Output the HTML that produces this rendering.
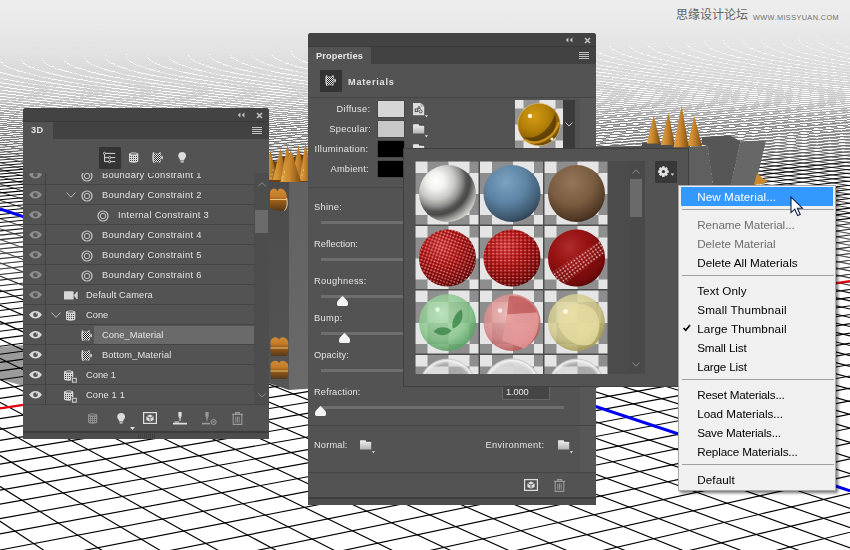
<!DOCTYPE html>
<html><head><meta charset="utf-8">
<style>
html,body{margin:0;padding:0;}
body{width:850px;height:550px;overflow:hidden;position:relative;background:#fff;font-family:"Liberation Sans",sans-serif;}
#bg{position:absolute;left:0;top:0;}
.abs{position:absolute}
.pn{will-change:transform;position:absolute;background:#535353;color:#dadada;font-size:10px;}
.t{position:absolute;white-space:nowrap;line-height:12px;height:12px;color:#e4e4e4;font-size:9.3px}
.row{position:absolute;left:0;width:231px;height:20px;border-top:1px solid #444;box-sizing:border-box}
.mi{position:absolute;left:18.2px;white-space:nowrap;line-height:14px;height:14px}
.ms{position:absolute;left:3px;width:151.6px;height:1px;background:#a0a0a0}
svg{position:absolute;overflow:visible}

</style></head><body>
<svg id="bg" width="850" height="550" viewBox="0 0 850 550">
<defs>
<linearGradient id="fg0" x1="0" y1="0" x2="0" y2="550" gradientUnits="userSpaceOnUse"><stop offset="0.0000" stop-color="#fff" stop-opacity="0.070"/><stop offset="0.0364" stop-color="#fff" stop-opacity="0.080"/><stop offset="0.0909" stop-color="#fff" stop-opacity="0.115"/><stop offset="0.1455" stop-color="#fff" stop-opacity="0.170"/><stop offset="0.1818" stop-color="#fff" stop-opacity="0.240"/><stop offset="0.2036" stop-color="#fff" stop-opacity="0.360"/><stop offset="0.2273" stop-color="#fff" stop-opacity="0.510"/><stop offset="0.2636" stop-color="#fff" stop-opacity="0.360"/><stop offset="0.3000" stop-color="#fff" stop-opacity="0.000"/><stop offset="1.0000" stop-color="#fff" stop-opacity="0.000"/></linearGradient>
<linearGradient id="fg1" x1="0" y1="0" x2="0" y2="550" gradientUnits="userSpaceOnUse"><stop offset="0.0000" stop-color="#fff" stop-opacity="0.000"/><stop offset="0.2273" stop-color="#fff" stop-opacity="0.000"/><stop offset="0.2636" stop-color="#fff" stop-opacity="0.360"/><stop offset="0.3000" stop-color="#fff" stop-opacity="0.920"/><stop offset="0.3273" stop-color="#fff" stop-opacity="1.000"/><stop offset="0.3909" stop-color="#fff" stop-opacity="1.000"/><stop offset="0.4545" stop-color="#fff" stop-opacity="0.600"/><stop offset="0.5455" stop-color="#fff" stop-opacity="0.000"/><stop offset="1.0000" stop-color="#fff" stop-opacity="0.000"/></linearGradient>
<linearGradient id="fg2" x1="0" y1="0" x2="0" y2="550" gradientUnits="userSpaceOnUse"><stop offset="0.0000" stop-color="#fff" stop-opacity="0.000"/><stop offset="0.3909" stop-color="#fff" stop-opacity="0.000"/><stop offset="0.5455" stop-color="#fff" stop-opacity="1.000"/><stop offset="1.0000" stop-color="#fff" stop-opacity="1.000"/></linearGradient>
<mask id="m0" maskUnits="userSpaceOnUse" x="0" y="0" width="850" height="550"><rect width="850" height="550" fill="url(#fg0)"/></mask>
<mask id="m1" maskUnits="userSpaceOnUse" x="0" y="0" width="850" height="550"><rect width="850" height="550" fill="url(#fg1)"/></mask>
<mask id="m2" maskUnits="userSpaceOnUse" x="0" y="0" width="850" height="550"><rect width="850" height="550" fill="url(#fg2)"/></mask>
<path id="ga" d="M-20.0 546.2L13.7 570.0M-20.0 508.0L73.6 570.0M-20.0 474.0L133.4 570.0M-20.0 443.6L193.2 570.0M-20.0 416.3L253.0 570.0M-20.0 391.6L312.8 570.0M-20.0 369.1L372.6 570.0M-20.0 348.6L432.4 570.0M-20.0 329.8L492.2 570.0M-20.0 312.5L552.1 570.0M-20.0 296.5L611.9 570.0M-20.0 281.7L671.7 570.0M-20.0 268.0L731.5 570.0M-20.0 255.2L791.3 570.0M-20.0 243.3L851.1 570.0M-20.0 232.2L870.0 555.1M-20.0 221.7L870.0 534.6M-20.0 211.9L870.0 515.3M-20.0 202.7L870.0 497.1M-20.0 193.9L870.0 480.0M-20.0 185.7L870.0 463.8M-20.0 177.9L870.0 448.5M-20.0 170.6L870.0 434.0M-20.0 163.6L870.0 420.2M-20.0 156.9L870.0 407.2M-20.0 150.6L870.0 394.7M-20.0 144.6L870.0 382.9M-20.0 138.9L870.0 371.6M-20.0 133.4L870.0 360.8M-20.0 128.2L870.0 350.5M-20.0 123.2L870.0 340.7M-20.0 118.4L870.0 331.3M-20.0 113.8L870.0 322.2M-20.0 109.4L870.0 313.6M-20.0 105.2L870.0 305.3M-20.0 101.1L870.0 297.3M-20.0 97.2L870.0 289.6M-20.0 93.4L870.0 282.2M-20.0 89.8L870.0 275.1M-20.0 86.3L870.0 268.2M-20.0 83.0L870.0 261.6M-20.0 79.7L870.0 255.3M-20.0 76.6L870.0 249.1M-20.0 73.6L870.0 243.1M-20.0 70.7L870.0 237.4M-20.0 67.8L870.0 231.8M-20.0 65.1L870.0 226.4M-20.0 62.5L870.0 221.2M-20.0 59.9L870.0 216.2M-20.0 57.4L870.0 211.3M-20.0 55.0L870.0 206.5M-20.0 52.6L870.0 201.9M-20.0 50.4L870.0 197.5M-20.0 48.2L870.0 193.1M-20.0 46.0L870.0 188.9M-20.0 43.9L870.0 184.8M-20.0 41.9L870.0 180.8M-20.0 40.0L870.0 177.0M-20.0 38.0L870.0 173.2M-20.0 36.2L870.0 169.5M-20.0 34.4L870.0 166.0M-20.0 32.6L870.0 162.5M-20.0 30.9L870.0 159.1M-20.0 29.2L870.0 155.8M-20.0 27.6L870.0 152.6M-20.0 26.0L870.0 149.4M-20.0 24.4L870.0 146.4M-20.0 22.9L870.0 143.4M-20.0 21.4L870.0 140.5M-20.0 20.0L870.0 137.6M-20.0 18.5L870.0 134.8M-20.0 17.2L870.0 132.1M-20.0 15.8L870.0 129.4M-20.0 14.5L870.0 126.8M-20.0 13.2L870.0 124.3M-20.0 11.9L870.0 121.8M-20.0 10.7L870.0 119.4M-20.0 9.5L870.0 117.0M-20.0 8.3L870.0 114.7M-20.0 7.1L870.0 112.4M-20.0 6.0L870.0 110.2M-20.0 4.9L870.0 108.0M-20.0 3.8L870.0 105.9M-20.0 2.7L870.0 103.8M-20.0 1.7L870.0 101.7M-20.0 0.7L870.0 99.7M-20.0 -0.3L870.0 97.7M-20.0 -1.3L870.0 95.8M-20.0 -2.3L870.0 93.9M-20.0 -3.2L870.0 92.0M-20.0 -4.1L870.0 90.2M-20.0 -5.1L870.0 88.4M-20.0 -6.0L870.0 86.6M-20.0 -6.8L870.0 84.9M-20.0 -7.7L870.0 83.2M-20.0 -8.5L870.0 81.5M-20.0 -9.4L870.0 79.9M-20.0 -10.2L870.0 78.3M-20.0 -11.0L870.0 76.7M-20.0 -11.8L870.0 75.2M-20.0 -12.6L870.0 73.6M-20.0 -13.3L870.0 72.1M-20.0 -14.1L870.0 70.7M-20.0 -14.8L870.0 69.2M-20.0 -15.5L870.0 67.8M-20.0 -16.2L870.0 66.4M-20.0 -16.9L870.0 65.0M-20.0 -17.6L870.0 63.7M-20.0 -18.3L870.0 62.3M-20.0 -19.0L870.0 61.0M-20.0 -19.6L870.0 59.7M-16.9 -20.0L870.0 58.4M-9.6 -20.0L870.0 57.2M-2.3 -20.0L870.0 56.0M4.9 -20.0L870.0 54.8M12.2 -20.0L870.0 53.6M19.5 -20.0L870.0 52.4M26.8 -20.0L870.0 51.2M34.0 -20.0L870.0 50.1M41.3 -20.0L870.0 49.0M48.6 -20.0L870.0 47.9M55.8 -20.0L870.0 46.8M63.1 -20.0L870.0 45.7M70.4 -20.0L870.0 44.6M77.7 -20.0L870.0 43.6M84.9 -20.0L870.0 42.5M92.2 -20.0L870.0 41.5M99.5 -20.0L870.0 40.5M106.7 -20.0L870.0 39.5M114.0 -20.0L870.0 38.6M121.3 -20.0L870.0 37.6M128.5 -20.0L870.0 36.7M135.8 -20.0L870.0 35.7M143.1 -20.0L870.0 34.8M150.4 -20.0L870.0 33.9M157.6 -20.0L870.0 33.0M164.9 -20.0L870.0 32.1M172.2 -20.0L870.0 31.2M179.4 -20.0L870.0 30.4M186.7 -20.0L870.0 29.5M194.0 -20.0L870.0 28.7M201.3 -20.0L870.0 27.8M208.5 -20.0L870.0 27.0M215.8 -20.0L870.0 26.2M223.1 -20.0L870.0 25.4M230.3 -20.0L870.0 24.6M237.6 -20.0L870.0 23.8M244.9 -20.0L870.0 23.1M252.1 -20.0L870.0 22.3M259.4 -20.0L870.0 21.6M266.7 -20.0L870.0 20.8M274.0 -20.0L870.0 20.1M281.2 -20.0L870.0 19.4M288.5 -20.0L870.0 18.6M295.8 -20.0L870.0 17.9M303.0 -20.0L870.0 17.2M310.3 -20.0L870.0 16.6M317.6 -20.0L870.0 15.9M324.9 -20.0L870.0 15.2M332.1 -20.0L870.0 14.5M339.4 -20.0L870.0 13.9M346.7 -20.0L870.0 13.2M353.9 -20.0L870.0 12.6M361.2 -20.0L870.0 11.9M368.5 -20.0L870.0 11.3M375.7 -20.0L870.0 10.7M383.0 -20.0L870.0 10.1M390.3 -20.0L870.0 9.4M397.6 -20.0L870.0 8.8M404.8 -20.0L870.0 8.2M412.1 -20.0L870.0 7.7M419.4 -20.0L870.0 7.1M426.6 -20.0L870.0 6.5M433.9 -20.0L870.0 5.9M441.2 -20.0L870.0 5.4M448.5 -20.0L870.0 4.8M455.7 -20.0L870.0 4.2M463.0 -20.0L870.0 3.7M470.3 -20.0L870.0 3.1M477.5 -20.0L870.0 2.6M484.8 -20.0L870.0 2.1M492.1 -20.0L870.0 1.5M499.3 -20.0L870.0 1.0M506.6 -20.0L870.0 0.5M513.9 -20.0L870.0 -0.0M521.2 -20.0L870.0 -0.5M528.4 -20.0L870.0 -1.0M535.7 -20.0L870.0 -1.5M543.0 -20.0L870.0 -2.0M550.2 -20.0L870.0 -2.5M557.5 -20.0L870.0 -3.0M564.8 -20.0L870.0 -3.4M572.1 -20.0L870.0 -3.9M579.3 -20.0L870.0 -4.4M586.6 -20.0L870.0 -4.8M593.9 -20.0L870.0 -5.3M601.1 -20.0L870.0 -5.8M608.4 -20.0L870.0 -6.2M615.7 -20.0L870.0 -6.7M622.9 -20.0L870.0 -7.1M630.2 -20.0L870.0 -7.5M637.5 -20.0L870.0 -8.0M644.8 -20.0L870.0 -8.4M652.0 -20.0L870.0 -8.8M659.3 -20.0L870.0 -9.2M666.6 -20.0L870.0 -9.7M673.8 -20.0L870.0 -10.1M681.1 -20.0L870.0 -10.5M688.4 -20.0L870.0 -10.9M695.7 -20.0L870.0 -11.3M702.9 -20.0L870.0 -11.7M710.2 -20.0L870.0 -12.1M717.5 -20.0L870.0 -12.5M724.7 -20.0L870.0 -12.9M732.0 -20.0L870.0 -13.3M739.3 -20.0L870.0 -13.6M746.5 -20.0L870.0 -14.0M753.8 -20.0L870.0 -14.4M761.1 -20.0L870.0 -14.8M768.4 -20.0L870.0 -15.1M775.6 -20.0L870.0 -15.5M782.9 -20.0L870.0 -15.9M790.2 -20.0L870.0 -16.2M797.4 -20.0L870.0 -16.6M804.7 -20.0L870.0 -16.9M812.0 -20.0L870.0 -17.3M819.3 -20.0L870.0 -17.6M826.5 -20.0L870.0 -18.0M833.8 -20.0L870.0 -18.3M841.1 -20.0L870.0 -18.7M848.3 -20.0L870.0 -19.0M855.6 -20.0L870.0 -19.3M862.9 -20.0L870.0 -19.7"/>
<path id="gb" d="M870.0 548.5L785.8 570.0M870.0 527.3L696.7 570.0M870.0 507.4L607.6 570.0M870.0 488.7L518.5 570.0M870.0 471.1L429.4 570.0M870.0 454.6L340.3 570.0M870.0 438.9L251.2 570.0M870.0 424.1L162.1 570.0M870.0 410.2L73.0 570.0M870.0 396.9L-16.1 570.0M870.0 384.3L-20.0 553.8M870.0 372.3L-20.0 537.6M870.0 360.9L-20.0 522.3M870.0 350.1L-20.0 507.6M870.0 339.7L-20.0 493.6M870.0 329.8L-20.0 480.3M870.0 320.3L-20.0 467.5M870.0 311.3L-20.0 455.3M870.0 302.6L-20.0 443.6M870.0 294.3L-20.0 432.4M870.0 286.3L-20.0 421.6M870.0 278.6L-20.0 411.3M870.0 271.3L-20.0 401.3M870.0 264.2L-20.0 391.8M870.0 257.4L-20.0 382.6M870.0 250.8L-20.0 373.7M870.0 244.4L-20.0 365.1M870.0 238.3L-20.0 356.9M870.0 232.4L-20.0 348.9M870.0 226.7L-20.0 341.2M870.0 221.2L-20.0 333.8M870.0 215.9L-20.0 326.6M870.0 210.7L-20.0 319.7M870.0 205.7L-20.0 312.9M870.0 200.9L-20.0 306.4M870.0 196.2L-20.0 300.1M870.0 191.7L-20.0 294.0M870.0 187.3L-20.0 288.0M870.0 183.0L-20.0 282.3M870.0 178.8L-20.0 276.7M870.0 174.8L-20.0 271.2M870.0 170.9L-20.0 265.9M870.0 167.1L-20.0 260.8M870.0 163.4L-20.0 255.8M870.0 159.8L-20.0 251.0M870.0 156.3L-20.0 246.2M870.0 152.9L-20.0 241.6M870.0 149.5L-20.0 237.1M870.0 146.3L-20.0 232.8M870.0 143.2L-20.0 228.5M870.0 140.1L-20.0 224.4M870.0 137.1L-20.0 220.3M870.0 134.2L-20.0 216.4M870.0 131.3L-20.0 212.5M870.0 128.5L-20.0 208.8M870.0 125.8L-20.0 205.1M870.0 123.1L-20.0 201.5M870.0 120.5L-20.0 198.0M870.0 118.0L-20.0 194.6M870.0 115.5L-20.0 191.3M870.0 113.1L-20.0 188.0M870.0 110.7L-20.0 184.8M870.0 108.4L-20.0 181.7M870.0 106.1L-20.0 178.6M870.0 103.9L-20.0 175.6M870.0 101.7L-20.0 172.7M870.0 99.6L-20.0 169.8M870.0 97.5L-20.0 167.0M870.0 95.5L-20.0 164.2M870.0 93.5L-20.0 161.5M870.0 91.5L-20.0 158.9M870.0 89.6L-20.0 156.3M870.0 87.7L-20.0 153.8M870.0 85.9L-20.0 151.3M870.0 84.1L-20.0 148.8M870.0 82.3L-20.0 146.4M870.0 80.6L-20.0 144.1M870.0 78.8L-20.0 141.8M870.0 77.2L-20.0 139.5M870.0 75.5L-20.0 137.3M870.0 73.9L-20.0 135.1M870.0 72.3L-20.0 133.0M870.0 70.8L-20.0 130.9M870.0 69.2L-20.0 128.8M870.0 67.7L-20.0 126.8M870.0 66.2L-20.0 124.8M870.0 64.8L-20.0 122.8M870.0 63.4L-20.0 120.9M870.0 62.0L-20.0 119.0M870.0 60.6L-20.0 117.2M870.0 59.2L-20.0 115.3M870.0 57.9L-20.0 113.5M870.0 56.6L-20.0 111.8M870.0 55.3L-20.0 110.0M870.0 54.0L-20.0 108.3M870.0 52.8L-20.0 106.6M870.0 51.5L-20.0 105.0M870.0 50.3L-20.0 103.3M870.0 49.1L-20.0 101.7M870.0 48.0L-20.0 100.1M870.0 46.8L-20.0 98.6M870.0 45.7L-20.0 97.1M870.0 44.6L-20.0 95.5M870.0 43.5L-20.0 94.1M870.0 42.4L-20.0 92.6M870.0 41.3L-20.0 91.1M870.0 40.2L-20.0 89.7M870.0 39.2L-20.0 88.3M870.0 38.2L-20.0 86.9M870.0 37.2L-20.0 85.6M870.0 36.2L-20.0 84.2M870.0 35.2L-20.0 82.9M870.0 34.2L-20.0 81.6M870.0 33.3L-20.0 80.3M870.0 32.3L-20.0 79.1M870.0 31.4L-20.0 77.8M870.0 30.5L-20.0 76.6M870.0 29.6L-20.0 75.4M870.0 28.7L-20.0 74.2M870.0 27.8L-20.0 73.0M870.0 27.0L-20.0 71.8M870.0 26.1L-20.0 70.7M870.0 25.3L-20.0 69.5M870.0 24.4L-20.0 68.4M870.0 23.6L-20.0 67.3M870.0 22.8L-20.0 66.2M870.0 22.0L-20.0 65.1M870.0 21.2L-20.0 64.1M870.0 20.4L-20.0 63.0M870.0 19.7L-20.0 62.0M870.0 18.9L-20.0 60.9M870.0 18.2L-20.0 59.9M870.0 17.4L-20.0 58.9M870.0 16.7L-20.0 57.9M870.0 16.0L-20.0 57.0M870.0 15.2L-20.0 56.0M870.0 14.5L-20.0 55.1M870.0 13.8L-20.0 54.1M870.0 13.2L-20.0 53.2M870.0 12.5L-20.0 52.3M870.0 11.8L-20.0 51.4M870.0 11.1L-20.0 50.5M870.0 10.5L-20.0 49.6M870.0 9.8L-20.0 48.7M870.0 9.2L-20.0 47.8M870.0 8.6L-20.0 47.0M870.0 7.9L-20.0 46.1M870.0 7.3L-20.0 45.3M870.0 6.7L-20.0 44.5M870.0 6.1L-20.0 43.7M870.0 5.5L-20.0 42.8M870.0 4.9L-20.0 42.0M870.0 4.3L-20.0 41.3M870.0 3.7L-20.0 40.5M870.0 3.1L-20.0 39.7M870.0 2.6L-20.0 38.9M870.0 2.0L-20.0 38.2M870.0 1.5L-20.0 37.4M870.0 0.9L-20.0 36.7M870.0 0.4L-20.0 35.9M870.0 -0.2L-20.0 35.2M870.0 -0.7L-20.0 34.5M870.0 -1.2L-20.0 33.8M870.0 -1.7L-20.0 33.1M870.0 -2.3L-20.0 32.4M870.0 -2.8L-20.0 31.7M870.0 -3.3L-20.0 31.0M870.0 -3.8L-20.0 30.3M870.0 -4.3L-20.0 29.7M870.0 -4.8L-20.0 29.0M870.0 -5.3L-20.0 28.4M870.0 -5.7L-20.0 27.7M870.0 -6.2L-20.0 27.1M870.0 -6.7L-20.0 26.4M870.0 -7.1L-20.0 25.8M870.0 -7.6L-20.0 25.2M870.0 -8.1L-20.0 24.6M870.0 -8.5L-20.0 24.0M870.0 -9.0L-20.0 23.4M870.0 -9.4L-20.0 22.8M870.0 -9.9L-20.0 22.2M870.0 -10.3L-20.0 21.6M870.0 -10.7L-20.0 21.0M870.0 -11.1L-20.0 20.4M870.0 -11.6L-20.0 19.8M870.0 -12.0L-20.0 19.3M870.0 -12.4L-20.0 18.7M870.0 -12.8L-20.0 18.2M870.0 -13.2L-20.0 17.6M870.0 -13.6L-20.0 17.1M870.0 -14.0L-20.0 16.5M870.0 -14.4L-20.0 16.0M870.0 -14.8L-20.0 15.5M870.0 -15.2L-20.0 14.9M870.0 -15.6L-20.0 14.4M870.0 -16.0L-20.0 13.9M870.0 -16.4L-20.0 13.4M870.0 -16.7L-20.0 12.9M870.0 -17.1L-20.0 12.4M870.0 -17.5L-20.0 11.9M870.0 -17.8L-20.0 11.4M870.0 -18.2L-20.0 10.9M870.0 -18.6L-20.0 10.4M870.0 -18.9L-20.0 9.9M870.0 -19.3L-20.0 9.4M870.0 -19.6L-20.0 9.0M870.0 -20.0L-20.0 8.5M859.8 -20.0L-20.0 8.0M848.9 -20.0L-20.0 7.6M838.1 -20.0L-20.0 7.1M827.3 -20.0L-20.0 6.7M816.4 -20.0L-20.0 6.2M805.6 -20.0L-20.0 5.8M794.8 -20.0L-20.0 5.3M784.0 -20.0L-20.0 4.9M773.1 -20.0L-20.0 4.4M762.3 -20.0L-20.0 4.0M751.5 -20.0L-20.0 3.6M740.6 -20.0L-20.0 3.2M729.8 -20.0L-20.0 2.7M719.0 -20.0L-20.0 2.3M708.2 -20.0L-20.0 1.9M697.3 -20.0L-20.0 1.5M686.5 -20.0L-20.0 1.1M675.7 -20.0L-20.0 0.7M664.8 -20.0L-20.0 0.3M654.0 -20.0L-20.0 -0.1M643.2 -20.0L-20.0 -0.5M632.3 -20.0L-20.0 -0.9M621.5 -20.0L-20.0 -1.3M610.7 -20.0L-20.0 -1.7M599.9 -20.0L-20.0 -2.1M589.0 -20.0L-20.0 -2.4M578.2 -20.0L-20.0 -2.8M567.4 -20.0L-20.0 -3.2M556.5 -20.0L-20.0 -3.6M545.7 -20.0L-20.0 -3.9M534.9 -20.0L-20.0 -4.3M524.0 -20.0L-20.0 -4.7M513.2 -20.0L-20.0 -5.0M502.4 -20.0L-20.0 -5.4M491.6 -20.0L-20.0 -5.7M480.7 -20.0L-20.0 -6.1M469.9 -20.0L-20.0 -6.5M459.1 -20.0L-20.0 -6.8M448.2 -20.0L-20.0 -7.1M437.4 -20.0L-20.0 -7.5M426.6 -20.0L-20.0 -7.8M415.7 -20.0L-20.0 -8.2M404.9 -20.0L-20.0 -8.5M394.1 -20.0L-20.0 -8.8M383.3 -20.0L-20.0 -9.2M372.4 -20.0L-20.0 -9.5M361.6 -20.0L-20.0 -9.8M350.8 -20.0L-20.0 -10.1M339.9 -20.0L-20.0 -10.5M329.1 -20.0L-20.0 -10.8M318.3 -20.0L-20.0 -11.1M307.5 -20.0L-20.0 -11.4M296.6 -20.0L-20.0 -11.7M285.8 -20.0L-20.0 -12.0M275.0 -20.0L-20.0 -12.3M264.1 -20.0L-20.0 -12.7M253.3 -20.0L-20.0 -13.0M242.5 -20.0L-20.0 -13.3M231.6 -20.0L-20.0 -13.6M220.8 -20.0L-20.0 -13.9M210.0 -20.0L-20.0 -14.2M199.2 -20.0L-20.0 -14.4M188.3 -20.0L-20.0 -14.7M177.5 -20.0L-20.0 -15.0M166.7 -20.0L-20.0 -15.3M155.8 -20.0L-20.0 -15.6M145.0 -20.0L-20.0 -15.9M134.2 -20.0L-20.0 -16.2M123.3 -20.0L-20.0 -16.5M112.5 -20.0L-20.0 -16.7M101.7 -20.0L-20.0 -17.0M90.9 -20.0L-20.0 -17.3M80.0 -20.0L-20.0 -17.6M69.2 -20.0L-20.0 -17.8M58.4 -20.0L-20.0 -18.1M47.5 -20.0L-20.0 -18.4M36.7 -20.0L-20.0 -18.6M25.9 -20.0L-20.0 -18.9M15.0 -20.0L-20.0 -19.2M4.2 -20.0L-20.0 -19.4M-6.6 -20.0L-20.0 -19.7M-17.4 -20.0L-20.0 -19.9"/>
</defs>
<rect width="850" height="550" fill="#fff"/>
<path d="M-1 347.2L24 345V386L-1 379.2Z" fill="#9b9b9b"/>
<g mask="url(#m0)" fill="none" stroke="#000" shape-rendering="crispEdges"><use href="#ga" stroke-width="0.6"/><use href="#gb" stroke-width="0.95"/></g>
<g mask="url(#m1)" fill="none" stroke="#000"><use href="#ga" stroke-width="0.75"/><use href="#gb" stroke-width="1.05"/></g>
<g mask="url(#m2)" fill="none" stroke="#000" stroke-width="1.15"><use href="#ga"/><use href="#gb"/></g>
<path d="M0 208.9L850 490.9" stroke="#0000f0" stroke-width="3"/>
<path d="M0 408.4L850 281.2" stroke="#e8000c" stroke-width="2.2"/>
<g id="scene"><defs>
<linearGradient id="cone" x1="0" y1="0" x2="1" y2="0"><stop offset="0" stop-color="#e0a444"/><stop offset=".45" stop-color="#c8862c"/><stop offset="1" stop-color="#7c4c14"/></linearGradient>
<linearGradient id="bxl" x1="0" y1="0" x2="0" y2="1"><stop offset="0" stop-color="#4b4b4b"/><stop offset="1" stop-color="#555555"/></linearGradient>
<linearGradient id="bxr" x1="0" y1="0" x2="0" y2="1"><stop offset="0" stop-color="#616161"/><stop offset="1" stop-color="#6a6a6a"/></linearGradient>
<radialGradient id="glow" cx=".5" cy=".5" r=".5"><stop offset="0" stop-color="#ffd27a"/><stop offset=".5" stop-color="#d8882a"/><stop offset="1" stop-color="#7a4a18" stop-opacity=".2"/></radialGradient>
<linearGradient id="glow2" x1="0" y1="0" x2="0" y2="1"><stop offset="0" stop-color="#d08a34"/><stop offset=".35" stop-color="#c47c28"/><stop offset=".55" stop-color="#9a5c18"/><stop offset="1" stop-color="#54381a"/></linearGradient>
</defs>
<!-- box between panels -->
<path d="M262 181.5H289V390L262 381Z" fill="url(#bxl)"/>
<path d="M289 181.5H312V388.4L289 390Z" fill="url(#bxr)"/>
<path d="M262 166L268 158L276 162L284 156L292 158L300 154L312 158V182H262Z" fill="#6a4212"/>
<g fill="url(#cone)">
<path d="M270.5 150.5L277.5 180H263.5Z"/><path d="M280.2 148.4L287.6 180H272.8Z"/><path d="M287.3 144.2L293.6 179H281Z"/><path d="M298.5 145.4L305.5 179H291.5Z"/><path d="M305.6 142.5L312 181H299.2Z"/><path d="M290.8 150.1L301.2 182H280.4Z"/>
</g>
<g fill="#fff4d0"><circle cx="273" cy="170" r=".6"/><circle cx="284.5" cy="172" r=".6"/><circle cx="272" cy="174.5" r=".6"/><circle cx="283" cy="177" r=".6"/><circle cx="303.5" cy="170" r=".6"/><circle cx="302" cy="175" r=".6"/><circle cx="271" cy="178" r=".6"/><circle cx="282.5" cy="180" r=".6"/></g>
<g id="blobs">
<path d="M270 192C272 187 276 188 277.5 191C279 187 284 188 286 193C288 199 287 206 285 210C281 212 274 211 270 208Z" fill="url(#glow2)"/>
<path d="M270 199.5H286.5" stroke="#ffd890" stroke-width="1" opacity=".8"/>
<path d="M286.5 198C288 203 287 208 284.5 210.5" fill="none" stroke="#f4e6d0" stroke-width=".9"/>
<path d="M270.5 341C273 336 277 336.5 279 339.5C281 336 286 337 288 341C289 346 288.5 352 287 356H271Z" fill="url(#glow2)"/>
<path d="M270.5 348H288" stroke="#ffd890" stroke-width="1" opacity=".8"/>
<path d="M270.5 364C273 359.5 277 360 279 363C281 359.5 286 360.5 288 364.5C289 369.5 288.5 375 287 379H271Z" fill="url(#glow2)"/>
<path d="M270.5 371H288" stroke="#ffd890" stroke-width="1" opacity=".8"/>
</g>
<!-- right group -->
<path d="M596 146.3H642V142.5H690V150H596Z" fill="#4e4e4e"/>
<path d="M701.8 137L729.8 135.4L740.5 141.2L730.6 186H713.3L707.5 146.1L701.8 144.5Z" fill="#565656"/>
<path d="M740.5 141.2L766 140.4L755.3 186H730.6Z" fill="#676767"/>
<path d="M688 147L707.5 146.1L713.3 186H688Z" fill="#5f5f5f"/>
<path d="M757 173.5L767 181.5L760 184.5H754Z" fill="#d08a2e"/>
<g fill="url(#cone)">
<path d="M653.7 115.2L660.6 143.4H646.8Z"/><path d="M668.3 113L675 145H660.8Z"/><path d="M694.3 116L702 146H687.4Z"/><path d="M681.6 105.2L688.8 147.2H673.6Z"/>
</g>
</g>
</svg>
<div class="abs" style="left:676px;top:8px;font-family:'Liberation Sans','Noto Sans CJK SC',sans-serif;font-size:12px;line-height:14px;color:#646464;white-space:nowrap">思缘设计论坛</div>
<div class="abs" style="left:753px;top:12.5px;font-size:7.3px;line-height:10px;letter-spacing:.41px;color:#707070;white-space:nowrap">WWW.MISSYUAN.COM</div>
<svg width="0" height="0" style="position:absolute">
<defs>
<symbol id="eye" viewBox="0 0 14 8" overflow="visible"><path d="M0 4C2.2 .9 4.6 0 7 0S11.8 .9 14 4C11.8 7.1 9.4 8 7 8S2.2 7.1 0 4Z"/><circle cx="7" cy="3.9" r="2.5" fill="#535353"/><circle cx="7.9" cy="3" r=".8"/></symbol>
<symbol id="ring" viewBox="0 0 12 12" overflow="visible"><circle cx="6" cy="6" r="5" fill="none" stroke="#cecece" stroke-width="1.15"/><circle cx="6" cy="6" r="2.7" fill="none" stroke="#c4c4c4" stroke-width="1"/></symbol>
<symbol id="chev" viewBox="0 0 10 6" overflow="visible"><path d="M.5 .5L5 5.3L9.5 .5" fill="none" stroke="#b8b8b8" stroke-width="1"/></symbol>
<symbol id="cam" viewBox="0 0 14 9" overflow="visible"><rect x="0" y=".3" width="9.6" height="8.2" rx=".6" fill="#d8d8d8"/><path d="M10.2 4.4L13.2 .9V8L10.2 4.4Z" fill="#d8d8d8" stroke="#d8d8d8" stroke-width=".8" stroke-linejoin="round"/></symbol>
<symbol id="mesh" viewBox="0 0 10 11" overflow="visible"><path d="M0 1.9C0 -.1 9.3 -.1 9.3 1.9V9.3C9.3 11.2 0 11.2 0 9.3Z" fill="#d8d8d8"/><ellipse cx="4.6" cy="1.9" rx="3.3" ry=".7" fill="#585858"/><g fill="#444"><rect x="1" y="4" width="1" height="1"/><rect x="3" y="4" width="1" height="1"/><rect x="5" y="4" width="1" height="1"/><rect x="7" y="4" width="1" height="1"/><rect x="1" y="6" width="1" height="1"/><rect x="3" y="6" width="1" height="1"/><rect x="5" y="6" width="1" height="1"/><rect x="7" y="6" width="1" height="1"/><rect x="1" y="8" width="1" height="1"/><rect x="3" y="8" width="1" height="1"/><rect x="5" y="8" width="1" height="1"/><rect x="7" y="8" width="1" height="1"/></g></symbol>
<symbol id="meshi" viewBox="0 0 13 13" overflow="visible"><use href="#mesh" x="0" y="0" width="10" height="11"/><rect x="7.2" y="7.2" width="6" height="6" fill="#535353"/><rect x="8.4" y="8.3" width="3.9" height="3.9" fill="none" stroke="#d4d4d4" stroke-width="1"/></symbol>
<pattern id="chk" width="2" height="2" patternUnits="userSpaceOnUse"><rect width="2" height="2" fill="#ececec"/><rect width="1" height="1" fill="#1e1e1e"/><rect x="1" y="1" width="1" height="1" fill="#1e1e1e"/></pattern>
<symbol id="mat" viewBox="0 0 10 11" overflow="visible"><path d="M.5 .2C1.3 1.5 2.3 1.9 3.8 1.9S6.3 1.5 7.2 .2C7.7 2.2 7.9 3.8 7.9 5.4S7.6 8.8 7 10.6C6 10 5 9.8 3.8 9.8S1.5 10.1 .6 10.6C.1 8.8 0 7 0 5.4S.1 2.2 .5 .2Z" fill="url(#chk)" stroke="#dedede" stroke-width=".5"/><path d="M.4 .6C.1 2.4 0 3.8 0 5.4S.2 8.8 .6 10.4" fill="none" stroke="#e6e6e6" stroke-width=".9"/><ellipse cx="9.1" cy="5.6" rx=".8" ry="1.8" fill="#e2e2e2"/></symbol>
<symbol id="bulb" viewBox="0 0 9 12" overflow="visible"><path d="M4.5 0C7 0 8.8 1.8 8.8 4.1C8.8 5.8 7.6 6.8 7 7.8C6.7 8.3 6.7 8.8 6.6 9.3H2.4C2.3 8.8 2.3 8.3 2 7.8C1.4 6.8 .2 5.8 .2 4.1C.2 1.8 2 0 4.5 0Z"/><rect x="2.6" y="10.2" width="3.8" height="1.3" rx=".5"/></symbol>
</defs></svg>

<!-- ================= 3D panel ================= -->
<div class="pn" id="p3d" style="left:23px;top:108px;width:246px;height:331px;border-radius:3px 3px 0 0;overflow:hidden">
 <div class="abs" style="left:0;top:0;width:246px;height:13px;background:#434343"></div>
 <div class="abs" style="left:0;top:13px;width:246px;height:1px;background:#3a3a3a"></div>
 <div class="abs" style="left:0;top:14px;width:246px;height:17px;background:#424242"></div>
 <div class="abs" style="left:0;top:14px;width:30px;height:17px;background:#535353"></div>
 <div class="t" style="left:8px;top:16px;font-weight:700;font-size:9.2px;letter-spacing:.45px;color:#e6e6e6">3D</div>
 <svg style="left:214px;top:4px" width="8" height="6" viewBox="0 0 8 6"><path d="M3.4 .6L.8 3L3.4 5.4ZM7.4 .6L4.8 3L7.4 5.4Z" fill="#c6c6c6"/></svg>
 <svg style="left:233px;top:3.5px" width="7" height="7" viewBox="0 0 7 7"><path d="M1 1L6 6M6 1L1 6" stroke="#c4c4c4" stroke-width="1.5"/></svg>
 <svg style="left:229px;top:19px" width="10" height="8" viewBox="0 0 10 8"><path d="M0 .5H10M0 2.5H10M0 4.5H10M0 6.5H10" stroke="#c4c4c4" stroke-width="1"/></svg>
 <!-- filter icons -->
 <div class="abs" style="left:76px;top:39px;width:22px;height:22px;background:#343434;border-radius:1px"></div>
 <svg style="left:80.4px;top:44px" width="12.6" height="12" viewBox="0 0 14 12" preserveAspectRatio="none"><path d="M1.8 2.6V9.6H6M1.8 5.6H6M2.6 1.4H13.6M8.6 5.6H13.6M8.6 9.6H13.6" fill="none" stroke="#e4e4e4" stroke-width="1"/><circle cx="1.6" cy="1.4" r="1.1" fill="#343434" stroke="#e4e4e4" stroke-width=".9"/><circle cx="7.3" cy="5.6" r="1.2" fill="#343434" stroke="#e4e4e4" stroke-width=".9"/><circle cx="7.3" cy="9.6" r="1.2" fill="#343434" stroke="#e4e4e4" stroke-width=".9"/></svg>
 <svg style="left:106px;top:44px" width="10" height="11"><use href="#mesh" width="10" height="11"/></svg>
 <svg style="left:130px;top:44px" width="10" height="11"><use href="#mat" width="10" height="11"/></svg>
 <svg style="left:155.3px;top:44.3px" width="8.3" height="11" fill="#dcdcdc"><use href="#bulb" width="8.3" height="11"/></svg>
 <!-- list -->
 <div class="abs" id="list3d" style="left:0;top:65px;width:246px;height:231px;overflow:hidden">
  <div class="abs" style="left:231px;top:0;width:15px;height:231px;background:#4d4d4d"></div>
  <div class="abs" style="left:232px;top:37px;width:13px;height:23px;background:#6b6b6b"></div>
  <svg style="left:235px;top:9px" width="8" height="4.6" viewBox="0 0 9 5"><path d="M.5 4.6L4.5 .6L8.5 4.6" fill="none" stroke="#8e8e8e" stroke-width="1.1"/></svg>
  <svg style="left:235px;top:220.4px" width="8" height="4.6" viewBox="0 0 9 5"><path d="M.5 .4L4.5 4.4L8.5 .4" fill="none" stroke="#8e8e8e" stroke-width="1.1"/></svg>
  <div class="abs" style="left:21.6px;top:0;width:1px;height:231px;background:#424242"></div>

  <div class="row" style="top:-9px"><svg style="left:5.8px;top:5.9px" width="13" height="7.6" fill="#8d8d8d"><use href="#eye" width="13" height="7.6"/></svg><svg style="left:57.6px;top:4.7px" width="12" height="12"><use href="#ring" width="12" height="12"/></svg><div class="t" style="left:79px;top:4.1px;letter-spacing:0.35px">Boundary Constraint 1</div></div>
  <div class="row" style="top:11px"><svg style="left:5.8px;top:5.9px" width="13" height="7.6" fill="#8d8d8d"><use href="#eye" width="13" height="7.6"/></svg><svg style="left:43px;top:7px" width="10" height="6"><use href="#chev" width="10" height="6"/></svg><svg style="left:57.6px;top:4.7px" width="12" height="12"><use href="#ring" width="12" height="12"/></svg><div class="t" style="left:79px;top:4.1px;letter-spacing:0.35px">Boundary Constraint 2</div></div>
  <div class="row" style="top:31px"><svg style="left:5.8px;top:5.9px" width="13" height="7.6" fill="#8d8d8d"><use href="#eye" width="13" height="7.6"/></svg><svg style="left:73.6px;top:4.7px" width="12" height="12"><use href="#ring" width="12" height="12"/></svg><div class="t" style="left:95px;top:4.1px;letter-spacing:0.35px">Internal Constraint 3</div></div>
  <div class="row" style="top:51px"><svg style="left:5.8px;top:5.9px" width="13" height="7.6" fill="#8d8d8d"><use href="#eye" width="13" height="7.6"/></svg><svg style="left:57.6px;top:4.7px" width="12" height="12"><use href="#ring" width="12" height="12"/></svg><div class="t" style="left:79px;top:4.1px;letter-spacing:0.35px">Boundary Constraint 4</div></div>
  <div class="row" style="top:71px"><svg style="left:5.8px;top:5.9px" width="13" height="7.6" fill="#8d8d8d"><use href="#eye" width="13" height="7.6"/></svg><svg style="left:57.6px;top:4.7px" width="12" height="12"><use href="#ring" width="12" height="12"/></svg><div class="t" style="left:79px;top:4.1px;letter-spacing:0.35px">Boundary Constraint 5</div></div>
  <div class="row" style="top:91px"><svg style="left:5.8px;top:5.9px" width="13" height="7.6" fill="#8d8d8d"><use href="#eye" width="13" height="7.6"/></svg><svg style="left:57.6px;top:4.7px" width="12" height="12"><use href="#ring" width="12" height="12"/></svg><div class="t" style="left:79px;top:4.1px;letter-spacing:0.35px">Boundary Constraint 6</div></div>
  <div class="row" style="top:111px"><svg style="left:5.8px;top:5.9px" width="13" height="7.6" fill="#8d8d8d"><use href="#eye" width="13" height="7.6"/></svg><svg style="left:41px;top:6px" width="14" height="9"><use href="#cam" width="14" height="9"/></svg><div class="t" style="left:63px;top:4.1px;letter-spacing:0.13px">Default Camera</div></div>
  <div class="row" style="top:131px"><svg style="left:5.8px;top:5.9px" width="13" height="7.6" fill="#dadada"><use href="#eye" width="13" height="7.6"/></svg><svg style="left:28px;top:7px" width="10" height="6"><use href="#chev" width="10" height="6"/></svg><svg style="left:43px;top:5px" width="10" height="11"><use href="#mesh" width="10" height="11"/></svg><div class="t" style="left:63px;top:4.1px;letter-spacing:0.02px">Cone</div></div>
  <div class="row" style="top:151px"><div class="abs" style="left:71px;top:1px;width:160px;height:18px;background:#6a6a6a"></div><svg style="left:5.8px;top:5.9px" width="13" height="7.6" fill="#dadada"><use href="#eye" width="13" height="7.6"/></svg><svg style="left:59.2px;top:5.2px" width="10" height="11"><use href="#mat" width="10" height="11"/></svg><div class="t" style="left:79px;top:4.1px;letter-spacing:0.08px">Cone_Material</div></div>
  <div class="row" style="top:171px"><svg style="left:5.8px;top:5.9px" width="13" height="7.6" fill="#dadada"><use href="#eye" width="13" height="7.6"/></svg><svg style="left:59.2px;top:5.2px" width="10" height="11"><use href="#mat" width="10" height="11"/></svg><div class="t" style="left:79px;top:4.1px;letter-spacing:0.12px">Bottom_Material</div></div>
  <div class="row" style="top:191px"><svg style="left:5.8px;top:5.9px" width="13" height="7.6" fill="#dadada"><use href="#eye" width="13" height="7.6"/></svg><svg style="left:41px;top:5px" width="13" height="13"><use href="#meshi" width="13" height="13"/></svg><div class="t" style="left:63px;top:4.1px;letter-spacing:0.00px">Cone 1</div></div>
  <div class="row" style="top:211px"><svg style="left:5.8px;top:5.9px" width="13" height="7.6" fill="#dadada"><use href="#eye" width="13" height="7.6"/></svg><svg style="left:41px;top:5px" width="13" height="13"><use href="#meshi" width="13" height="13"/></svg><div class="t" style="left:63px;top:4.1px;letter-spacing:0.16px">Cone 1 1</div></div>
 </div>
 <div class="abs" style="left:0;top:296px;width:246px;height:1px;background:#454545"></div>
 <!-- bottom toolbar -->
 <div id="tb3d" class="abs" style="left:0.6px;top:298.3px;width:246px;height:26px">
  <svg style="left:64px;top:7px;opacity:.45" width="10" height="11"><use href="#mesh" width="10" height="11"/></svg>
  <svg style="left:93.3px;top:6.3px" width="8.3" height="11" fill="#dcdcdc"><use href="#bulb" width="8.3" height="11"/></svg>
  <svg style="left:106px;top:21px" width="5" height="3" viewBox="0 0 5 3"><path d="M0 0H5L2.5 3Z" fill="#e0e0e0"/></svg>
  <svg style="left:119px;top:6px" width="14" height="12" viewBox="0 0 14 12"><rect x=".6" y=".6" width="12.8" height="10.8" fill="none" stroke="#e0e0e0" stroke-width="1.2"/><path d="M7 2.4L10.6 4.2V8L7 9.8L3.4 8V4.2Z" fill="#e0e0e0"/><path d="M3.4 4.2L7 6L10.6 4.2M7 6V9.8" fill="none" stroke="#535353" stroke-width=".9"/></svg>
  <svg style="left:149px;top:6px" width="14" height="13" viewBox="0 0 14 13"><rect x="5.4" y="0" width="3.2" height="4.6" fill="#e0e0e0"/><path d="M5.4 4.6H8.6L7 7Z" fill="#e0e0e0"/><path d="M7 6V9" stroke="#e0e0e0" stroke-width="1"/><path d="M0 11.6H14" stroke="#e0e0e0" stroke-width="1.6"/><path d="M1.5 10H6" stroke="#e0e0e0" stroke-width="1.2"/></svg>
  <svg style="left:178px;top:6px;opacity:.5" width="15" height="13" viewBox="0 0 15 13"><rect x="3.4" y="0" width="3.2" height="4.6" fill="#e0e0e0"/><path d="M3.4 4.6H6.6L5 7Z" fill="#e0e0e0"/><path d="M5 6V9" stroke="#e0e0e0" stroke-width="1"/><path d="M0 11.6H8" stroke="#e0e0e0" stroke-width="1.6"/><circle cx="11.6" cy="10" r="2.6" fill="none" stroke="#e0e0e0" stroke-width="1"/><path d="M10 8.4L13.2 11.6M13.2 8.4L10 11.6" stroke="#e0e0e0" stroke-width=".8"/></svg>
  <svg style="left:208px;top:6px;opacity:.5" width="11" height="13" viewBox="0 0 11 13"><path d="M0 2.4H11M3.6 2.4V.6H7.4V2.4" fill="none" stroke="#e0e0e0" stroke-width="1.1"/><path d="M1.2 2.6V12.4H9.8V2.6" fill="none" stroke="#e0e0e0" stroke-width="1.1"/><path d="M3.8 4.6V10.6M5.5 4.6V10.6M7.2 4.6V10.6" stroke="#e0e0e0" stroke-width=".9"/></svg>
 </div>
 <div class="abs" style="left:0;top:323px;width:246px;height:2px;background:#3c3c3c"></div>
 <div class="abs" style="left:0;top:325px;width:246px;height:6px;background:#4d4d4d"></div>
 <svg style="left:115px;top:325px" width="18" height="6" viewBox="0 0 18 6"><path d="M.5 .5V5.5M2.5 .5V5.5M4.5 .5V5.5M6.5 .5V5.5M8.5 .5V5.5M10.5 .5V5.5M12.5 .5V5.5M14.5 .5V5.5M16.5 .5V5.5" stroke="#3e3e3e" stroke-width="1"/></svg>
</div>

<svg width="0" height="0" style="position:absolute">
<defs>
<linearGradient id="fgr" x1="0" y1="0" x2="0" y2="1"><stop offset="0" stop-color="#f0f0f0"/><stop offset="1" stop-color="#b4b4b4"/></linearGradient>
<symbol id="folder" viewBox="0 0 15 14" overflow="visible"><path d="M0 1.2C0 .5 .4 .2 1 .2H5C5.6 .2 6 .6 6.2 1.6H10.6C11 1.6 11.2 1.8 11.2 2.2V9.4H0Z" fill="url(#fgr)"/><path d="M6.4 .6H11.2V1.6H6.4Z" fill="#3a3a3a"/><path d="M11.8 11.2H15L13.4 13.2Z" fill="#e8e8e8"/></symbol>
<symbol id="trash" viewBox="0 0 11 13" overflow="visible"><path d="M0 2.4H11M3.6 2.4V.6H7.4V2.4" fill="none" stroke="#e0e0e0" stroke-width="1.1"/><path d="M1.2 2.6V12.4H9.8V2.6" fill="none" stroke="#e0e0e0" stroke-width="1.1"/><path d="M3.8 4.6V10.6M5.5 4.6V10.6M7.2 4.6V10.6" stroke="#e0e0e0" stroke-width=".9"/></symbol>
<symbol id="rend" viewBox="0 0 14 12" overflow="visible"><rect x=".6" y=".6" width="12.8" height="10.8" fill="none" stroke="#e0e0e0" stroke-width="1.2"/><path d="M7 2.4L10.6 4.2V8L7 9.8L3.4 8V4.2Z" fill="#e0e0e0"/><path d="M3.4 4.2L7 6L10.6 4.2M7 6V9.8" fill="none" stroke="#535353" stroke-width=".9"/></symbol>
<symbol id="thumb" viewBox="0 0 11 10" overflow="visible"><path d="M5.5 0C6.6 .9 8.4 2.9 10 4.6C11 5.8 11 7 11 8C11 9.4 10.2 10 9 10H2C.8 10 0 9.4 0 8C0 7 0 5.8 1 4.6C2.6 2.9 4.4 .9 5.5 0Z" fill="#f4f4f4"/></symbol>
</defs></svg>
<!-- ================= Properties panel ================= -->
<div class="pn" id="pprop" style="left:308px;top:33px;width:288px;height:472px;border-radius:3px 3px 0 0;overflow:hidden">
 <div class="abs" style="left:0;top:0;width:288px;height:13px;background:#434343"></div>
 <div class="abs" style="left:0;top:13px;width:288px;height:1px;background:#3a3a3a"></div>
 <div class="abs" style="left:0;top:14px;width:288px;height:17px;background:#424242"></div>
 <div class="abs" style="left:0;top:14px;width:63px;height:17px;background:#535353"></div>
 <div class="t" style="left:8px;top:16.7px;font-weight:700;font-size:9.2px;letter-spacing:.15px;color:#e6e6e6">Properties</div>
 <svg style="left:257px;top:4px" width="8" height="6" viewBox="0 0 8 6"><path d="M3.4 .6L.8 3L3.4 5.4ZM7.4 .6L4.8 3L7.4 5.4Z" fill="#c6c6c6"/></svg>
 <svg style="left:276px;top:3.5px" width="7" height="7" viewBox="0 0 7 7"><path d="M1 1L6 6M6 1L1 6" stroke="#c4c4c4" stroke-width="1.5"/></svg>
 <svg style="left:271px;top:19px" width="10" height="8" viewBox="0 0 10 8"><path d="M0 .5H10M0 2.5H10M0 4.5H10M0 6.5H10" stroke="#c4c4c4" stroke-width="1"/></svg>
 <!-- Materials header -->
 <div class="abs" style="left:12px;top:37px;width:22px;height:22px;background:#343434;border-radius:1px"></div>
 <svg style="left:18px;top:42px" width="10" height="11"><use href="#mat" width="10" height="11"/></svg>
 <div class="t" style="left:40px;top:42.6px;font-weight:700;font-size:9.2px;letter-spacing:.75px;color:#e0e0e0">Materials</div>
 <div class="abs" style="left:0;top:64px;width:288px;height:1px;background:#454545"></div>
 <div id="scrollband" class="abs" style="left:272.3px;top:65px;width:15.7px;height:374px;background:#575757"></div>
 <!-- colour rows -->
 <div class="t" style="left:28.6px;top:70px;letter-spacing:0.30px">Diffuse:</div>
 <div class="t" style="left:21.3px;top:90px;letter-spacing:0.28px">Specular:</div>
 <div class="t" style="left:6.5px;top:110px;letter-spacing:0.33px">Illumination:</div>
 <div class="t" style="left:22.5px;top:130px;letter-spacing:0.20px">Ambient:</div>
 <div class="abs" style="left:69.8px;top:67.8px;width:26.4px;height:16.2px;background:#d6d6d6;box-shadow:0 0 0 .6px #404040"></div>
 <div class="abs" style="left:69.8px;top:87.8px;width:26.4px;height:16.2px;background:#c8c8c8;box-shadow:0 0 0 .6px #404040"></div>
 <div class="abs" style="left:69.8px;top:107.8px;width:26.4px;height:16.2px;background:#000;box-shadow:0 0 0 .6px #404040"></div>
 <div class="abs" style="left:69.8px;top:127.8px;width:26.4px;height:16.2px;background:#000;box-shadow:0 0 0 .6px #404040"></div>
 <svg style="left:105px;top:70px" width="15" height="14" viewBox="0 0 15 14"><path d="M0 0H8.2L11.2 3V12.2H0Z" fill="#dcdcdc"/><path d="M8.2 0V3H11.2Z" fill="#f6f6f6" stroke="#444" stroke-width=".5"/><rect x="2.2" y="6" width="2.6" height="2.6" fill="none" stroke="#444" stroke-width=".9"/><circle cx="7.6" cy="8.4" r="1.5" fill="none" stroke="#444" stroke-width=".9"/><path d="M4.6 5.4L6 3.2L7.4 5.4Z" fill="none" stroke="#444" stroke-width=".8"/><path d="M11.8 12.2H15L13.4 14.2Z" fill="#e8e8e8"/></svg>
 <svg style="left:105px;top:91px" width="15" height="14"><use href="#folder" width="15" height="14"/></svg>
 <svg style="left:105px;top:110.5px" width="15" height="14"><use href="#folder" width="15" height="14"/></svg>
 <!-- gold preview -->
 <div class="abs" style="left:255px;top:67px;width:12px;height:48px;background:#3b3b3b"></div>
 <svg style="left:257px;top:89px" width="8" height="5" viewBox="0 0 8 5"><path d="M.5 .5L4 4L7.5 .5" fill="none" stroke="#c8c8c8" stroke-width="1"/></svg>
 <svg style="left:207px;top:67px" width="48" height="48" viewBox="0 0 48 48">
  <defs><pattern id="ck2" width="32" height="32" x="-7.5" y="-7.5" patternUnits="userSpaceOnUse"><rect width="32" height="32" fill="#949494"/><rect width="16" height="16" fill="#e6e6e6"/><rect x="16" y="16" width="16" height="16" fill="#e6e6e6"/></pattern>
  <radialGradient id="gold" cx=".38" cy=".3" r=".8"><stop offset="0" stop-color="#d49c12"/><stop offset=".45" stop-color="#b27e08"/><stop offset=".8" stop-color="#805806"/><stop offset="1" stop-color="#4c3203"/></radialGradient></defs>
  <rect width="48" height="48" fill="url(#ck2)"/>
  <circle cx="24" cy="24.5" r="21.2" fill="url(#gold)" stroke="#e8c070" stroke-width=".6"/>
  <path d="M9 37C20 41 36 30 40 13C42 20 41 28 36 36C30 43 18 46 9 37Z" fill="#3a2402" opacity=".55"/>
  <path d="M10 40C22 47 40 38 44 22" fill="none" stroke="#e0a020" stroke-width="2.5" opacity=".8"/>
  <circle cx="15" cy="16" r="2.2" fill="#fff6d8"/><circle cx="37" cy="39" r="1.6" fill="#fff0c8"/>
 </svg>
 <div class="abs" style="left:0;top:154px;width:288px;height:1px;background:#454545"></div>
 <!-- sliders -->
 <div class="t" style="left:6px;top:168px;letter-spacing:0.27px">Shine:</div><div class="abs" style="left:13px;top:188px;width:243px;height:3px;background:#6e6e6e"></div>
 <div class="t" style="left:6px;top:205px;letter-spacing:0.00px">Reflection:</div><div class="abs" style="left:13px;top:225px;width:243px;height:3px;background:#6e6e6e"></div>
 <div class="t" style="left:6px;top:242px;letter-spacing:0.31px">Roughness:</div><div class="abs" style="left:13px;top:262px;width:243px;height:3px;background:#6e6e6e"></div>
 <svg style="left:28.5px;top:263px" width="11" height="10"><use href="#thumb" width="11" height="10"/></svg>
 <div class="t" style="left:6px;top:279px;letter-spacing:0.36px">Bump:</div><div class="abs" style="left:13px;top:299px;width:243px;height:3px;background:#6e6e6e"></div>
 <svg style="left:30.5px;top:300px" width="11" height="10"><use href="#thumb" width="11" height="10"/></svg>
 <div class="t" style="left:6px;top:316px;letter-spacing:0.10px">Opacity:</div><div class="abs" style="left:13px;top:336px;width:243px;height:3px;background:#6e6e6e"></div>
 <div class="t" style="left:6px;top:353px;letter-spacing:0.14px">Refraction:</div><div class="abs" style="left:13px;top:373px;width:243px;height:3px;background:#6e6e6e"></div>
 <svg style="left:6.5px;top:373px" width="11" height="10"><use href="#thumb" width="11" height="10"/></svg>
 <div class="abs" style="left:194px;top:345px;width:47.5px;height:22.3px;background:#454545;border:1px solid #666;box-sizing:border-box"></div>
 <div class="t" style="left:198px;top:352.5px;color:#e8e8e8;letter-spacing:-0.17px">1.000</div>
 <div class="abs" style="left:0;top:392px;width:288px;height:1px;background:#454545"></div>
 <div class="t" style="left:6px;top:405.8px;letter-spacing:0.15px">Normal:</div>
 <svg style="left:52px;top:406.7px" width="15" height="14"><use href="#folder" width="15" height="14"/></svg>
 <div class="t" style="left:150px;width:86.5px;text-align:right;top:405.8px;letter-spacing:0.35px">Environment:</div>
 <svg style="left:250px;top:406.7px" width="15" height="14"><use href="#folder" width="15" height="14"/></svg>
 <div class="abs" style="left:0;top:439px;width:288px;height:1px;background:#454545"></div>
 <svg style="left:216px;top:446px" width="14" height="12"><use href="#rend" width="14" height="12"/></svg>
 <svg style="left:246px;top:446px;opacity:.5" width="11" height="13"><use href="#trash" width="11" height="13"/></svg>
 <div class="abs" style="left:0;top:464px;width:288px;height:2px;background:#3c3c3c"></div>
 <div class="abs" style="left:0;top:466px;width:288px;height:6px;background:#4d4d4d"></div>
</div>

<!-- ================= Material picker popup ================= -->
<div class="abs" id="popup" style="left:403px;top:148px;width:286px;height:239px;background:#535353;box-shadow:inset 0 0 0 1px #3f3f3f;overflow:hidden">
 <div class="abs" style="left:12px;top:13px;width:230px;height:213px;background:#4b4b4b;overflow:hidden">
  <svg style="left:0;top:0" width="230" height="213" viewBox="0 0 230 213">
   <defs>
    <pattern id="ck" width="42" height="42" x="-9" y="-9.5" patternUnits="userSpaceOnUse"><rect width="42" height="42" fill="#8e8e8e"/><rect width="21" height="21" fill="#e5e5e5"/><rect x="21" y="21" width="21" height="21" fill="#e5e5e5"/></pattern>
    <radialGradient id="sWhite" cx=".3" cy=".28" r=".85"><stop offset="0" stop-color="#ffffff"/><stop offset=".18" stop-color="#f2f2ee"/><stop offset=".38" stop-color="#c8c8c4"/><stop offset=".52" stop-color="#929290"/><stop offset=".63" stop-color="#545454"/><stop offset=".7" stop-color="#4a4a48"/><stop offset=".8" stop-color="#8c8c8a"/><stop offset=".9" stop-color="#c4c4c0"/><stop offset="1" stop-color="#dededa"/></radialGradient>
    <radialGradient id="sBlue" cx=".4" cy=".3" r=".8"><stop offset="0" stop-color="#7ca2c0"/><stop offset=".45" stop-color="#5d84a4"/><stop offset=".8" stop-color="#3c566c"/><stop offset="1" stop-color="#1e2c3a"/></radialGradient>
    <radialGradient id="sWood" cx=".42" cy=".3" r=".78"><stop offset="0" stop-color="#94755a"/><stop offset=".5" stop-color="#7a5c40"/><stop offset=".82" stop-color="#523a26"/><stop offset="1" stop-color="#2a1c12"/></radialGradient>
    <radialGradient id="sRed" cx=".38" cy=".3" r=".8"><stop offset="0" stop-color="#d84040"/><stop offset=".4" stop-color="#b41818"/><stop offset=".8" stop-color="#7c0c0c"/><stop offset="1" stop-color="#3a0404"/></radialGradient>
    <radialGradient id="sGreen" cx=".4" cy=".35" r=".75"><stop offset="0" stop-color="#b4e0b4" stop-opacity=".85"/><stop offset=".6" stop-color="#86c48a" stop-opacity=".85"/><stop offset=".88" stop-color="#58a064" stop-opacity=".9"/><stop offset="1" stop-color="#9ad4a2" stop-opacity=".95"/></radialGradient>
    <radialGradient id="sPink" cx=".4" cy=".35" r=".75"><stop offset="0" stop-color="#ecb0b0" stop-opacity=".85"/><stop offset=".6" stop-color="#d68484" stop-opacity=".85"/><stop offset=".88" stop-color="#b85a5a" stop-opacity=".9"/><stop offset="1" stop-color="#e4a4a4" stop-opacity=".95"/></radialGradient>
    <radialGradient id="sYel" cx=".4" cy=".35" r=".75"><stop offset="0" stop-color="#e8e2b0" stop-opacity=".85"/><stop offset=".6" stop-color="#d0c888" stop-opacity=".85"/><stop offset=".88" stop-color="#a49c54" stop-opacity=".9"/><stop offset="1" stop-color="#dcd494" stop-opacity=".95"/></radialGradient>
    <radialGradient id="sGlass" cx=".5" cy=".5" r=".5"><stop offset="0" stop-color="#d8d8d8" stop-opacity=".25"/><stop offset=".8" stop-color="#d0d0d0" stop-opacity=".45"/><stop offset=".93" stop-color="#f4f4f4" stop-opacity=".95"/><stop offset="1" stop-color="#bdbdbd" stop-opacity=".9"/></radialGradient>
    <pattern id="dots" width="3.2" height="3.2" patternUnits="userSpaceOnUse" patternTransform="rotate(20)"><circle cx="1" cy="1" r=".85" fill="#ffc8c8" opacity=".6"/><circle cx="2.6" cy="2.6" r=".8" fill="#400" opacity=".55"/></pattern>
    <pattern id="dots3" width="3.4" height="3.4" patternUnits="userSpaceOnUse" patternTransform="rotate(-35)"><circle cx="1.2" cy="1.2" r=".9" fill="#ffe4e4" opacity=".8"/></pattern>
    <pattern id="dots2" width="4" height="3.4" patternUnits="userSpaceOnUse"><rect x="0" y="0" width="2.2" height="1.1" fill="#ffb8b8" opacity=".5"/><rect x="2" y="1.7" width="2" height="1.2" fill="#500" opacity=".5"/></pattern>
   </defs>
   <!-- row 1 -->
   <g transform="translate(.5,.5)"><rect width="63" height="63" fill="url(#ck)"/><circle cx="32" cy="32" r="28.5" fill="url(#sWhite)"/></g>
   <g transform="translate(65,.5)"><rect width="63" height="63" fill="url(#ck)"/><circle cx="32" cy="32" r="28.5" fill="url(#sBlue)"/></g>
   <g transform="translate(129.5,.5)"><rect width="63" height="63" fill="url(#ck)"/><circle cx="32" cy="32" r="28.5" fill="url(#sWood)"/></g>
   <!-- row 2 -->
   <g transform="translate(.5,65)"><rect width="63" height="63" fill="url(#ck)"/><circle cx="32" cy="32" r="28.5" fill="url(#sRed)"/><circle cx="32" cy="32" r="28.5" fill="url(#dots)"/></g>
   <g transform="translate(65,65)"><rect width="63" height="63" fill="url(#ck)"/><circle cx="32" cy="32" r="28.5" fill="url(#sRed)"/><circle cx="32" cy="32" r="28.5" fill="url(#dots2)"/></g>
   <g transform="translate(129.5,65)"><rect width="63" height="63" fill="url(#ck)"/><circle cx="32" cy="32" r="28.5" fill="url(#sRed)"/><circle cx="32" cy="32" r="28.5" fill="#600808" opacity=".35"/><clipPath id="c3"><circle cx="32" cy="32" r="28.5"/></clipPath><path d="M2 50L62 10V26L14 62Z" fill="url(#dots3)" clip-path="url(#c3)"/></g>
   <!-- row 3 -->
   <g transform="translate(.5,129.5)"><rect width="63" height="63" fill="url(#ck)"/><circle cx="32" cy="32" r="28.5" fill="url(#sGreen)"/><path d="M37 38C36 30 40 22 46 19C49 27 45 36 37 38ZM36 40C30 35 22 36 18 41C24 46 32 46 36 40Z" fill="#3f8a4c" opacity=".85"/><circle cx="22" cy="19" r="2.2" fill="#e8ffe8" opacity=".9"/></g>
   <g transform="translate(65,129.5)"><rect width="63" height="63" fill="url(#ck)"/><circle cx="32" cy="32" r="28.5" fill="url(#sPink)"/><path d="M29 6C40 4 52 10 57 22L27 24Z" fill="#c25a5a" opacity=".8"/><path d="M27 24L57 22C62 34 56 50 44 58L22 50Z" fill="#e69a9a" opacity=".8"/><circle cx="20" cy="20" r="2.2" fill="#fff0f0" opacity=".9"/></g>
   <g transform="translate(129.5,129.5)"><rect width="63" height="63" fill="url(#ck)"/><circle cx="32" cy="32" r="28.5" fill="url(#sYel)"/><path d="M16 22C22 12 40 10 50 20C58 30 56 46 46 54C34 58 20 50 14 36Z" fill="#e8dca0" opacity=".75"/><circle cx="21" cy="21" r="2.2" fill="#fffff0" opacity=".9"/></g>
   <!-- row 4 (clipped) -->
   <g transform="translate(.5,194)"><rect width="63" height="63" fill="url(#ck)"/><circle cx="32" cy="32" r="28.5" fill="url(#sGlass)"/></g>
   <g transform="translate(65,194)"><rect width="63" height="63" fill="url(#ck)"/><circle cx="32" cy="32" r="28.5" fill="#dcdcdc" opacity=".9"/><circle cx="32" cy="32" r="28.5" fill="url(#sGlass)"/></g>
   <g transform="translate(129.5,194)"><rect width="63" height="63" fill="url(#ck)"/><circle cx="32" cy="32" r="28.5" fill="url(#sGlass)"/></g>
  </svg>
  <!-- scrollbar -->
  <div class="abs" style="left:213.5px;top:0;width:16.5px;height:213px;background:#494949"></div>
  <div class="abs" style="left:214.5px;top:18px;width:12.5px;height:38px;background:#6a6a6a"></div>
  <svg style="left:217px;top:8px" width="8" height="5" viewBox="0 0 8 5"><path d="M.4 4.5L4 .8L7.6 4.5" fill="none" stroke="#8a8a8a" stroke-width="1"/></svg>
  <svg style="left:217px;top:201px" width="8" height="5" viewBox="0 0 8 5"><path d="M.4 .5L4 4.2L7.6 .5" fill="none" stroke="#8a8a8a" stroke-width="1"/></svg>
 </div>
 <!-- gear button -->
 <div class="abs" style="left:251.5px;top:13px;width:22px;height:22px;background:#383838;border-radius:1px"></div>
 <svg style="left:255px;top:18px" width="18" height="12" viewBox="0 0 18 12"><g transform="translate(5.4,5.6)"><path d="M-1.1 -5.3H1.1L1.5 -3.7L2.9 -4.5L4.5 -2.9L3.7 -1.5L5.3 -1.1V1.1L3.7 1.5L4.5 2.9L2.9 4.5L1.5 3.7L1.1 5.3H-1.1L-1.5 3.7L-2.9 4.5L-4.5 2.9L-3.7 1.5L-5.3 1.1V-1.1L-3.7 -1.5L-4.5 -2.9L-2.9 -4.5L-1.5 -3.7Z" fill="#e2e2e2"/><circle r="1.7" fill="#383838"/></g><path d="M12.6 7.6H16.2L14.4 9.8Z" fill="#e2e2e2"/></svg>
</div>

<!-- ================= Context menu ================= -->
<div class="abs" id="menu" style="left:678px;top:184.5px;width:157.6px;height:306.5px;background:#f0f0f0;border:1px solid #a8a8a8;box-sizing:border-box;box-shadow:2px 2px 3px rgba(0,0,0,.55);font-size:11.7px;color:#000">
 <div class="abs" style="left:1.5px;top:1.5px;width:152.6px;height:19px;background:#3399ff"></div>
 <div class="mi" style="top:4.3px;color:#fff;letter-spacing:0.07px">New Material...</div>
 <div class="ms" style="top:23px"></div>
 <div class="mi" style="top:32.3px;color:#6d6d6d;letter-spacing:-0.07px">Rename Material...</div>
 <div class="mi" style="top:51.3px;color:#6d6d6d;letter-spacing:-0.01px">Delete Material</div>
 <div class="mi" style="top:70.3px;letter-spacing:0.02px">Delete All Materials</div>
 <div class="ms" style="top:89px"></div>
 <div class="mi" style="top:98.3px;letter-spacing:0.09px">Text Only</div>
 <div class="mi" style="top:117.3px;letter-spacing:0.18px">Small Thumbnail</div>
 <div class="mi" style="top:136.3px;letter-spacing:0.13px">Large Thumbnail</div>
 <svg style="left:3.6px;top:138.6px" width="7.6" height="7.6" viewBox="0 0 8 8"><path d="M.6 4.2L2.9 6.6L7.4 1" fill="none" stroke="#000" stroke-width="1.7"/></svg>
 <div class="mi" style="top:155.3px;letter-spacing:-0.12px">Small List</div>
 <div class="mi" style="top:174.3px;letter-spacing:-0.18px">Large List</div>
 <div class="ms" style="top:193.5px"></div>
 <div class="mi" style="top:202.3px;letter-spacing:-0.20px">Reset Materials...</div>
 <div class="mi" style="top:221.3px;letter-spacing:-0.04px">Load Materials...</div>
 <div class="mi" style="top:240.3px;letter-spacing:-0.20px">Save Materials...</div>
 <div class="mi" style="top:259.3px;letter-spacing:-0.14px">Replace Materials...</div>
 <div class="ms" style="top:278.5px"></div>
 <div class="mi" style="top:287.3px;letter-spacing:0.09px">Default</div>
</div>
<!-- cursor -->
<svg style="left:790.3px;top:196.4px" width="14" height="21" viewBox="0 0 14 21"><path d="M1 1V16.6L4.8 13.2L7.6 19.6L10.2 18.4L7.4 12.2H12.4Z" fill="#fff" stroke="#10204a" stroke-width="1.1" stroke-linejoin="miter"/></svg>

</body></html>
